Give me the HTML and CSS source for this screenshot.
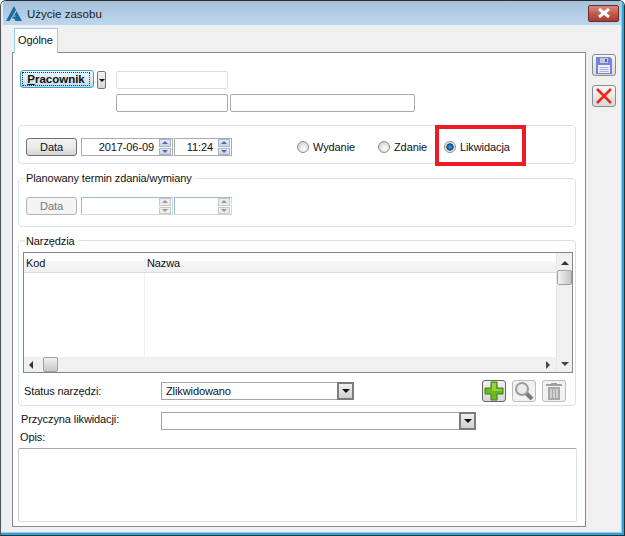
FILE: index.html
```html
<!DOCTYPE html>
<html lang="pl">
<head>
    <meta charset="UTF-8">
    <meta name="viewport" content="width=device-width, initial-scale=1.0">
    <title>Użycie zasobu</title>
    <link rel="stylesheet" href="styles.css">
</head>
<body>
    <div class="window">
        <div class="titlebar">
            <svg class="logo" width="16" height="15" viewBox="0 0 16 15">
                <path d="M8 0 L10 4 L3.5 15 H0 Z" fill="#1c6c9c"/>
                <path d="M10.6 5.2 L16 15 H9.5 L8.2 12.6 H6 Z" fill="#1c6c9c"/>
                <path d="M6.6 11 L8.6 7.6 L10 11 Z" fill="#5a9cc4"/>
            </svg>
            <span class="title">Użycie zasobu</span>
            <button type="button" class="close">
                <svg width="14" height="10" viewBox="0 0 14 10">
                    <path d="M2 1 L12 9 M12 1 L2 9" stroke="#fff" stroke-width="3"/>
                </svg>
            </button>
        </div>

        <div class="content">
            <div class="main">
                <div class="tabs"><div class="tab">Ogólne</div></div>

                <div class="panel">
                    <div class="employee">
                        <button type="button" class="btn-employee"><span><u>P</u>racownik</span></button>
                        <button type="button" class="btn-drop"><i class="tri-down"></i></button>
                        <div class="employee-fields">
                            <input type="text" class="field field-light field-code">
                            <div class="employee-line">
                                <input type="text" class="field field-code">
                                <input type="text" class="field field-name">
                            </div>
                        </div>
                    </div>

                    <fieldset class="box box-action">
                        <div class="date-row">
                            <button type="button" class="btn">Data</button>
                            <div class="spin spin-date">
                                <span class="spin-value">2017-06-09</span>
                                <span class="spin-btns"><b><i class="tri-up blue"></i></b><b><i class="tri-down blue"></i></b></span>
                            </div>
                            <div class="spin spin-time">
                                <span class="spin-value">11:24</span>
                                <span class="spin-btns"><b><i class="tri-up blue"></i></b><b><i class="tri-down blue"></i></b></span>
                            </div>
                            <div class="radios">
                                <label class="radio radio-w"><input type="radio" name="action"> Wydanie</label>
                                <label class="radio radio-z"><input type="radio" name="action"> Zdanie</label>
                                <label class="radio"><input type="radio" name="action" checked> Likwidacja</label>
                            </div>
                        </div>
                        <div class="highlight"></div>
                    </fieldset>

                    <fieldset class="box box-term">
                        <legend>Planowany termin zdania/wymiany</legend>
                        <div class="date-row">
                            <button type="button" class="btn btn-off">Data</button>
                            <div class="spin spin-date spin-off">
                                <span class="spin-value"></span>
                                <span class="spin-btns"><b><i class="tri-up"></i></b><b><i class="tri-down"></i></b></span>
                            </div>
                            <div class="spin spin-time spin-off">
                                <span class="spin-value"></span>
                                <span class="spin-btns"><b><i class="tri-up"></i></b><b><i class="tri-down"></i></b></span>
                            </div>
                        </div>
                    </fieldset>

                    <fieldset class="box box-tools">
                        <legend>Narzędzia</legend>
                        <div class="grid">
                            <div class="grid-left">
                                <div class="grid-head">
                                    <div class="col-code">Kod</div>
                                    <div class="col-name">Nazwa</div>
                                </div>
                                <div class="grid-rows"><div class="col-code"></div></div>
                                <div class="hscroll">
                                    <i class="tri-left"></i>
                                    <span class="thumb thumb-h"></span>
                                    <i class="tri-right"></i>
                                </div>
                            </div>
                            <div class="vscroll">
                                <i class="tri-up dark"></i>
                                <span class="thumb thumb-v"></span>
                                <i class="tri-down dark"></i>
                            </div>
                        </div>
                        <div class="status-row">
                            <span class="row-label">Status narzędzi:</span>
                            <div class="combo combo-status">
                                <span>Zlikwidowano</span>
                                <b class="combo-arrow"><i class="tri-down"></i></b>
                            </div>
                            <div class="tools">
                                <button type="button" class="tool tool-on">
                                    <svg width="20" height="20" viewBox="0 0 20 20">
                                        <path d="M7 1 H13 V7 H19 V13 H13 V19 H7 V13 H1 V7 H7 Z" fill="#6cb820" stroke="#3f7d12"/>
                                        <path d="M8 2 H12 V8 H18 V10 H8 Z" fill="#93d43e"/>
                                    </svg>
                                </button>
                                <button type="button" class="tool">
                                    <svg width="20" height="20" viewBox="0 0 20 20">
                                        <path d="M12 12 L18 18" stroke="#7c7c7c" stroke-width="4"/>
                                        <circle cx="8" cy="8" r="6" fill="#e8ebed" stroke="#9c9c9c" stroke-width="2"/>
                                    </svg>
                                </button>
                                <button type="button" class="tool">
                                    <svg width="18" height="20" viewBox="0 0 18 20">
                                        <path d="M6 2 H12 V3 H17 V5 H1 V3 H6 Z" fill="#a0a0a0"/>
                                        <path d="M3 6 H15 V19 H3 Z" fill="#a8a8a8"/>
                                        <path d="M6 8 V17 M9 8 V17 M12 8 V17" stroke="#e0e0e0" stroke-width="1.4"/>
                                    </svg>
                                </button>
                            </div>
                        </div>
                    </fieldset>

                    <div class="reason-row">
                        <span class="row-label reason-label">Przyczyna likwidacji:</span>
                        <div class="combo combo-reason">
                            <span></span>
                            <b class="combo-arrow"><i class="tri-down"></i></b>
                        </div>
                    </div>
                    <div class="note-label">Opis:</div>
                    <textarea class="note"></textarea>
                </div>
            </div>

            <div class="side">
                <button type="button" class="side-btn">
                    <svg width="16" height="17" viewBox="0 0 16 17">
                        <path d="M0 0 H14 L16 2 V17 H0 Z" fill="#7583dc"/>
                        <path d="M4 1 H12 V6 H4 Z" fill="#c5cad6"/>
                        <path d="M9 2 H11 V5 H9 Z" fill="#5862a8"/>
                        <path d="M2 8 H14 V16 H2 Z" fill="#eef0fa"/>
                        <path d="M3.5 10.5 H12.5 M3.5 12.5 H12.5 M3.5 14.5 H12.5" stroke="#a6aedf"/>
                    </svg>
                </button>
                <button type="button" class="side-btn">
                    <svg width="18" height="16" viewBox="0 0 18 16">
                        <path d="M2 1 L16 15 M16 1 L2 15" stroke="#ee2a12" stroke-width="2.6"/>
                    </svg>
                </button>
            </div>
        </div>
    </div>
</body>
</html>
```

FILE: styles.css
```css
* {
    box-sizing: border-box;
}
html, body {
    margin: 0;
    padding: 0;
}
body {
    width: 625px;
    height: 536px;
    overflow: hidden;
    background: #fff;
    font-family: "Liberation Sans", Arial, sans-serif;
    font-size: 11px;
    letter-spacing: -0.1px;
    color: #111;
}
button, input, textarea {
    font-family: inherit;
    font-size: inherit;
    letter-spacing: inherit;
    margin: 0;
}
i {
    display: block;
}

/* window frame */
.window {
    position: relative;
    width: 625px;
    height: 536px;
    background: #f0f0f0;
    border: 1px solid #2c2c2c;
    border-left-color: #555;
    border-radius: 6px 6px 0 0;
    overflow: hidden;
}
.window::after {
    content: "";
    position: absolute;
    inset: 0;
    border-right: 2px solid #1fa9dc;
    border-bottom: 2px solid #1fa9dc;
    box-shadow: inset -1px -1px 0 #9ccbea, inset 2px 0 0 #e4eef6;
    pointer-events: none;
}
.titlebar {
    height: 24px;
    display: flex;
    align-items: center;
    padding: 0 5px 0 5px;
    background: linear-gradient(#a4c0da, #bdd7ed);
}
.logo {
    margin-right: 5px;
}
.title {
    font-size: 11.5px;
    letter-spacing: 0;
    padding-top: 2px;
    color: #1c1c1c;
}
.close {
    margin-left: auto;
    width: 31px;
    height: 17px;
    padding: 0;
    display: flex;
    align-items: center;
    justify-content: center;
    border: 1px solid #6d2a2a;
    border-radius: 2px;
    background: linear-gradient(#d88a80, #c25a4e 50%, #a93a2e);
}
.content {
    display: flex;
    padding-left: 11px;
}
.main {
    width: 574px;
}
.tabs {
    height: 27px;
    padding: 3px 0 0 2px;
}
.tab {
    width: 44px;
    height: 25px;
    padding: 5px 0 0 3px;
    background: #fff;
    border: 1px solid #9fcbf0;
    border-bottom: none;
    position: relative;
    z-index: 1;
}
.panel {
    height: 475px;
    background: #fff;
    border: 1px solid #8a8a8e;
    padding: 17px 9px 0 5px;
}
.side {
    display: flex;
    flex-direction: column;
    gap: 9px;
    padding: 29px 0 0 6px;
}
.side-btn {
    width: 24px;
    height: 22px;
    padding: 0;
    display: flex;
    align-items: center;
    justify-content: center;
    border: 1px solid #8c8c8c;
    border-radius: 3px;
    background: linear-gradient(#f6f6f6, #e8e8e8 50%, #d8d8d8);
}

/* employee */
.employee {
    display: flex;
    align-items: flex-start;
    height: 42px;
    padding-left: 2px;
}
.btn-employee {
    width: 74px;
    height: 18px;
    padding: 1px 3px 1px 1px;
    font-size: 11.5px;
    font-weight: bold;
    letter-spacing: 0;
    color: #111;
    border: 1px solid #2ea6d8;
    border-radius: 3px;
    background: linear-gradient(#eef7fc, #dcecf6 50%, #bcd8e8);
}
.btn-employee span {
    display: block;
    height: 14px;
    line-height: 13px;
    border: 1px dotted #333;
}
.btn-drop {
    width: 9px;
    height: 18px;
    margin: 1px 0 0 3px;
    padding: 0;
    display: flex;
    align-items: center;
    justify-content: center;
    border: 1px solid #777;
    border-radius: 2px;
    background: linear-gradient(#f4f4f4, #d6d6d6);
}
.employee-fields {
    margin: 1px 0 0 10px;
}
.employee-line {
    display: flex;
    gap: 2px;
    margin-top: 5px;
}
.field {
    display: block;
    height: 18px;
    background: #fff;
    border: 1px solid #ababab;
    border-radius: 2px;
    padding: 0;
}
.field-light {
    border-color: #dedede;
}
.field-code {
    width: 112px;
}
.field-name {
    width: 185px;
}

/* groups */
.box {
    position: relative;
    margin: 13px 0 0 0;
    padding: 0 0 0 7px;
    width: 558px;
    min-width: 0;
    border: 1px solid #d8e0e8;
    border-radius: 4px;
}
.box legend {
    margin-left: -1px;
    padding: 0 3px 0 1px;
    height: 14px;
    line-height: 15px;
}
.box-action {
    height: 39px;
    padding-top: 12px;
}
.box-term {
    height: 56px;
    margin-top: 7px;
    padding-top: 12px;
}
.box-tools {
    height: 173px;
    margin-top: 6px;
    padding: 0 2px 0 4px;
}
.box-tools legend {
    margin-left: 2px;
    line-height: 17px;
}
.date-row {
    display: flex;
    align-items: center;
    height: 18px;
}
.btn {
    width: 51px;
    height: 18px;
    padding: 0;
    color: #111;
    border: 1px solid #707070;
    border-radius: 3px;
    background: linear-gradient(#f2f2f2, #ebebeb 50%, #d4d4d4);
}
.btn-off {
    color: #777;
    border-color: #b4b4b4;
    background: #f4f4f4;
}

/* date and time spinners */
.spin {
    height: 18px;
    display: flex;
    align-items: center;
    border: 1px solid #ababab;
    background: #fff;
}
.spin-date {
    width: 92px;
    margin-left: 4px;
}
.spin-time {
    width: 58px;
    margin-left: 1px;
}
.spin-value {
    flex: 1;
    text-align: right;
    padding-right: 5px;
}
.spin-btns {
    width: 12px;
    height: 16px;
    margin-right: 1px;
    display: flex;
    flex-direction: column;
    gap: 1px;
}
.spin-btns b {
    flex: 1;
    display: flex;
    align-items: center;
    justify-content: center;
    background: linear-gradient(#e4ecf6, #c4d4ea);
    border: 1px solid #a9b6c8;
}
.spin-off {
    border-color: #98bcdf #d8d8d8 #d8d8d8 #98bcdf;
}
.spin-off .spin-btns b {
    background: #ececec;
    border-color: #c8c8c8;
}

/* small arrows */
.tri-up, .tri-down, .tri-left, .tri-right {
    width: 0;
    height: 0;
    border-style: solid;
    border-color: transparent;
}
.tri-up {
    border-width: 0 3px 3px;
    border-bottom-color: #9a9a9a;
}
.tri-down {
    border-width: 3px 3px 0;
    border-top-color: #9a9a9a;
}
.tri-up.blue {
    border-bottom-color: #5566a8;
}
.tri-down.blue {
    border-top-color: #5566a8;
}
.tri-up.dark {
    border-width: 0 4px 4px;
    border-bottom-color: #333;
}
.tri-down.dark {
    border-width: 4px 4px 0;
    border-top-color: #444;
}
.btn-drop .tri-down, .combo-arrow .tri-down {
    border-top-color: #111;
}
.combo-arrow .tri-down {
    border-width: 4px 4px 0;
}
.tri-left {
    border-width: 4px 4px 4px 0;
    border-right-color: #333;
}
.tri-right {
    border-width: 4px 0 4px 4px;
    border-left-color: #444;
}

/* radio buttons */
.radios {
    display: flex;
    margin-left: 65px;
}
.radio {
    display: flex;
    align-items: center;
    gap: 4px;
}
.radio-w {
    width: 81px;
}
.radio-z {
    width: 66px;
}
.radio input {
    appearance: none;
    width: 12px;
    height: 12px;
    margin: 0;
    border: 1px solid #8e8f8f;
    border-radius: 50%;
    background: radial-gradient(circle at 60% 65%, #fff, #dcdcdc 60%, #c0c0c0);
}
.radio input:checked {
    background: radial-gradient(circle closest-side at 50% 50%, #3fb0e6 0, #0f5f96 50%, #0a4a78 68%, #dcdcdc 78%, #f2f2f2 100%);
}
.highlight {
    position: absolute;
    left: 416px;
    top: -1px;
    width: 91px;
    height: 41px;
    border: 4px solid #ed1c24;
}

/* tools table */
.grid {
    display: flex;
    width: 550px;
    height: 121px;
    margin-top: 5px;
    border: 1px solid #82878c;
}
.grid-left {
    flex: 1;
    display: flex;
    flex-direction: column;
}
.grid-head {
    display: flex;
    height: 20px;
    padding-top: 8px;
    background: linear-gradient(#fff 0, #fff 8px, #f6f7f8 8px, #eef0f1 100%);
    border-bottom: 1px solid #dcdcdc;
}
.grid-head div {
    margin-top: -4px;
}
.col-code {
    width: 121px;
    padding-left: 2px;
    border-right: 1px solid #f0f0f0;
}
.col-name {
    padding-left: 2px;
}
.grid-rows {
    flex: 1;
    display: flex;
}
.hscroll {
    height: 15px;
    display: flex;
    align-items: center;
    background: #f0f0f0;
    padding-left: 5px;
}
.tri-right {
    margin-left: auto;
    margin-right: 6px;
}
.thumb {
    display: block;
    border: 1px solid #a0a4a8;
    border-radius: 2px;
}
.thumb-h {
    width: 15px;
    height: 15px;
    margin-left: 10px;
    background: linear-gradient(#f0f0f0, #c8c8c8);
}
.vscroll {
    width: 16px;
    background: #f0f0f0;
    border-left: 1px solid #e8e8e8;
    display: flex;
    flex-direction: column;
    align-items: center;
    padding: 8px 0 6px;
}
.thumb-v {
    width: 15px;
    height: 15px;
    margin: 5px 0 auto;
    background: linear-gradient(90deg, #f4f4f4, #c4c4c4);
}

/* rows under the table */
.status-row {
    display: flex;
    align-items: center;
    height: 22px;
    margin-top: 7px;
}
.row-label {
    width: 138px;
    padding-left: 1px;
}
.combo {
    height: 18px;
    display: flex;
    align-items: center;
    justify-content: space-between;
    padding-left: 4px;
    background: #fff;
    border: 1px solid #a5a5a5;
}
.combo-status {
    width: 193px;
}
.combo-reason {
    width: 315px;
}
.combo-arrow {
    width: 17px;
    height: 18px;
    margin: -1px -1px -1px 0;
    display: flex;
    align-items: center;
    justify-content: center;
    border: 2px solid #7c7c7c;
    background: linear-gradient(#f0f0f0, #d0d0d0);
}
.tools {
    display: flex;
    gap: 6px;
    margin-left: 128px;
}
.tool {
    width: 24px;
    height: 22px;
    padding: 0;
    display: flex;
    align-items: center;
    justify-content: center;
    background: #f2f2f2;
    border: 1px solid #bcbcbc;
    border-radius: 3px;
}
.tool-on {
    border-color: #666;
    background: linear-gradient(#f0f0f0, #d8d8d8);
}
.reason-row {
    display: flex;
    align-items: center;
    margin-top: 6px;
}
.reason-label {
    width: 143px;
    padding: 0 0 4px 3px;
}
.note-label {
    height: 14px;
    margin: 0 0 4px 2px;
    line-height: 14px;
}
.note {
    display: block;
    width: 559px;
    height: 74px;
    resize: none;
    background: #fff;
    border: 1px solid #dce2ea;
    border-top-color: #a8a8ac;
    border-left-color: #c8c8cc;
    border-radius: 2px;
}
```
